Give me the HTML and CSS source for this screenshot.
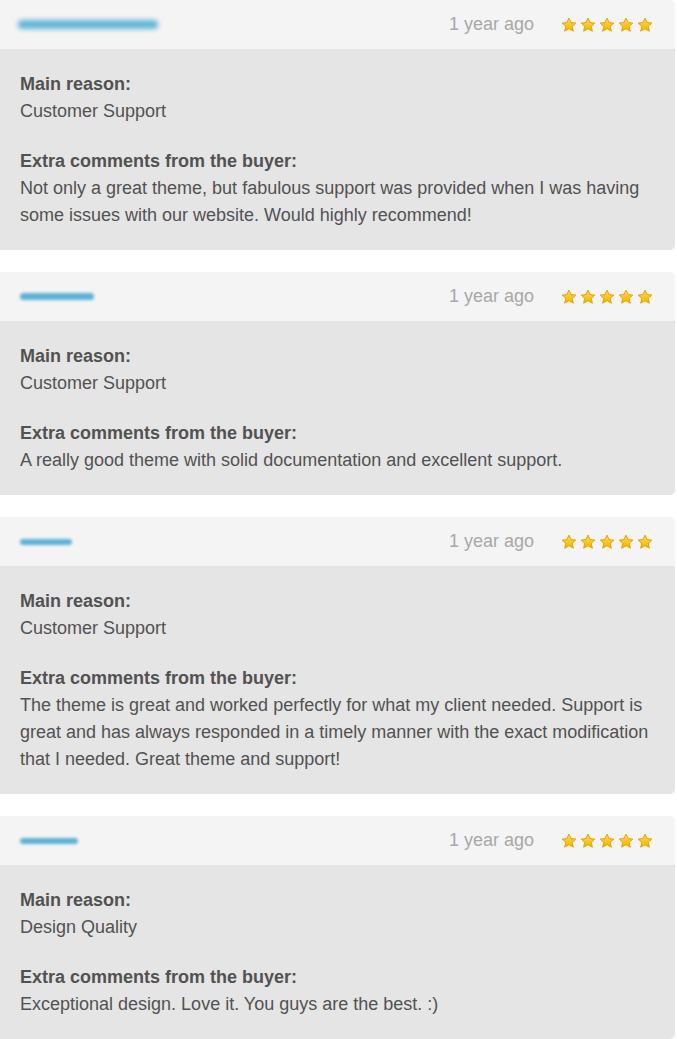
FILE: index.html
```html
<!DOCTYPE html>
<html>
<head>
<meta charset="utf-8">
<link rel="stylesheet" href="styles.css">
</head>
<body>
<svg width="0" height="0" class="defs">
  <defs>
    <linearGradient id="sg" x1="0" y1="0" x2="0" y2="1">
      <stop offset="0" stop-color="#ffdc5a"/>
      <stop offset="1" stop-color="#f6b000"/>
    </linearGradient>
    <symbol id="star" viewBox="0 0 16 16">
      <path d="M8 1.2 L10.1 5.6 L14.8 6.1 L11.3 9.3 L12.3 14.2 L8 11.7 L3.7 14.2 L4.7 9.3 L1.2 6.1 L5.9 5.6 Z" fill="url(#sg)" stroke="#e3a400" stroke-width="1" stroke-linejoin="round"/>
    </symbol>
  </defs>
</svg>

<div class="review">
  <div class="review-head">
    <span class="name name-1"></span>
    <span class="ago">1 year ago</span>
    <span class="stars">
      <svg class="star"><use href="#star"/></svg><svg class="star"><use href="#star"/></svg><svg class="star"><use href="#star"/></svg><svg class="star"><use href="#star"/></svg><svg class="star"><use href="#star"/></svg>
    </span>
  </div>
  <div class="review-body">
    <p><b>Main reason:</b><br>Customer Support</p>
    <p><b>Extra comments from the buyer:</b><br>Not only a great theme, but fabulous support was provided when I was having some issues with our website. Would highly recommend!</p>
  </div>
</div>

<div class="review">
  <div class="review-head">
    <span class="name name-2"></span>
    <span class="ago">1 year ago</span>
    <span class="stars">
      <svg class="star"><use href="#star"/></svg><svg class="star"><use href="#star"/></svg><svg class="star"><use href="#star"/></svg><svg class="star"><use href="#star"/></svg><svg class="star"><use href="#star"/></svg>
    </span>
  </div>
  <div class="review-body">
    <p><b>Main reason:</b><br>Customer Support</p>
    <p><b>Extra comments from the buyer:</b><br>A really good theme with solid documentation and excellent support.</p>
  </div>
</div>

<div class="review">
  <div class="review-head">
    <span class="name name-3"></span>
    <span class="ago">1 year ago</span>
    <span class="stars">
      <svg class="star"><use href="#star"/></svg><svg class="star"><use href="#star"/></svg><svg class="star"><use href="#star"/></svg><svg class="star"><use href="#star"/></svg><svg class="star"><use href="#star"/></svg>
    </span>
  </div>
  <div class="review-body">
    <p><b>Main reason:</b><br>Customer Support</p>
    <p><b>Extra comments from the buyer:</b><br>The theme is great and worked perfectly for what my client needed. Support is great and has always responded in a timely manner with the exact modification that I needed. Great theme and support!</p>
  </div>
</div>

<div class="review">
  <div class="review-head">
    <span class="name name-4"></span>
    <span class="ago">1 year ago</span>
    <span class="stars">
      <svg class="star"><use href="#star"/></svg><svg class="star"><use href="#star"/></svg><svg class="star"><use href="#star"/></svg><svg class="star"><use href="#star"/></svg><svg class="star"><use href="#star"/></svg>
    </span>
  </div>
  <div class="review-body">
    <p><b>Main reason:</b><br>Design Quality</p>
    <p><b>Extra comments from the buyer:</b><br>Exceptional design. Love it. You guys are the best. :)</p>
  </div>
</div>
</body>
</html>
```

FILE: styles.css
```css
html, body {
  margin: 0;
  padding: 0;
  background: #ffffff;
}
body {
  font-family: "Liberation Sans", Arial, sans-serif;
  color: #525252;
  width: 675px;
}
.defs {
  position: absolute;
  width: 0;
  height: 0;
}
.review {
  margin-bottom: 22.5px;
}
.review-head {
  height: 49px;
  background: #f4f4f4;
  border-radius: 0 5px 0 0;
  display: flex;
  align-items: center;
  padding: 0 22px 0 20px;
}
.name {
  display: block;
  height: 7px;
  border-radius: 4px;
  background: #5cb2d4;
  filter: blur(1.8px);
  margin-right: auto;
}
.name-1 { width: 140px; margin-left: -2px; height: 9px; filter: blur(2.5px); background: #62b6d6; }
.name-2 { width: 74px; }
.name-3 { width: 52px; height: 6px; }
.name-4 { width: 58px; height: 6px; }
.ago {
  font-size: 18px;
  color: #a8a8a8;
  margin-right: 27px;
}
.stars {
  display: flex;
  gap: 3px;
}
.star {
  width: 16px;
  height: 16px;
  display: block;
}
.review-body {
  background: #e5e5e5;
  padding: 22px 20px 21px 20px;
  font-size: 18px;
  line-height: 27px;
  border-radius: 0 0 5px 0;
}
.review-body p {
  margin: 0 0 22.5px 0;
}
.review-body p:last-child {
  margin-bottom: 0;
}
.review-body b {
  font-weight: bold;
}
```
